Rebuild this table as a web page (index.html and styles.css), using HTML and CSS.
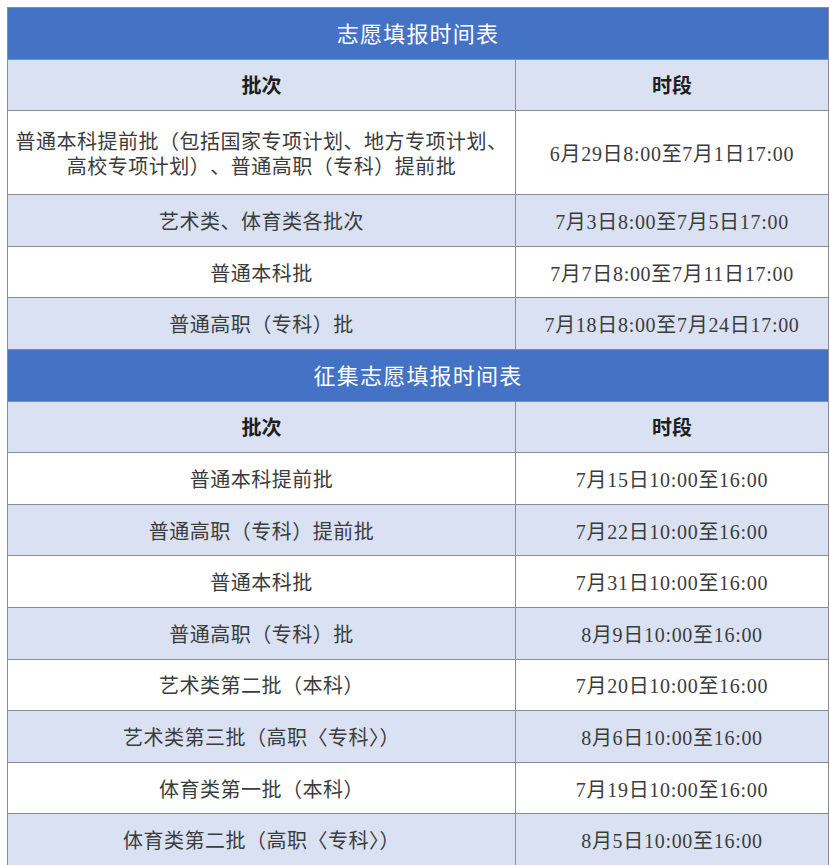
FILE: index.html
```html
<!DOCTYPE html>
<html lang="zh-CN">
<head>
<meta charset="utf-8">
<title>志愿填报时间表</title>
<link rel="stylesheet" href="styles.css">
</head>
<body>
<table class="schedule">
  <colgroup>
    <col class="col-batch">
    <col class="col-time">
  </colgroup>
  <tbody>
    <tr class="title"><th colspan="2">志愿填报时间表</th></tr>
    <tr class="head"><th>批次</th><th>时段</th></tr>
    <tr class="tall"><td>普通本科提前批（包括国家专项计划、地方专项计划、<br>高校专项计划）、普通高职（专科）提前批</td><td class="time">6月29日8:00至7月1日17:00</td></tr>
    <tr class="alt"><td>艺术类、体育类各批次</td><td class="time">7月3日8:00至7月5日17:00</td></tr>
    <tr><td>普通本科批</td><td class="time">7月7日8:00至7月11日17:00</td></tr>
    <tr class="alt"><td>普通高职（专科）批</td><td class="time">7月18日8:00至7月24日17:00</td></tr>
    <tr class="title"><th colspan="2">征集志愿填报时间表</th></tr>
    <tr class="head"><th>批次</th><th>时段</th></tr>
    <tr><td>普通本科提前批</td><td class="time">7月15日10:00至16:00</td></tr>
    <tr class="alt"><td>普通高职（专科）提前批</td><td class="time">7月22日10:00至16:00</td></tr>
    <tr><td>普通本科批</td><td class="time">7月31日10:00至16:00</td></tr>
    <tr class="alt"><td>普通高职（专科）批</td><td class="time">8月9日10:00至16:00</td></tr>
    <tr><td>艺术类第二批（本科）</td><td class="time">7月20日10:00至16:00</td></tr>
    <tr class="alt"><td>艺术类第三批（高职〈专科〉）</td><td class="time">8月6日10:00至16:00</td></tr>
    <tr><td>体育类第一批（本科）</td><td class="time">7月19日10:00至16:00</td></tr>
    <tr class="alt"><td>体育类第二批（高职〈专科〉）</td><td class="time">8月5日10:00至16:00</td></tr>
  </tbody>
</table>
</body>
</html>
```
FILE: styles.css
```css
html, body {
  margin: 0;
  padding: 0;
  background: #ffffff;
}
body {
  padding: 7px 0 0 7px;
  font-family: "Liberation Serif", "Noto Sans CJK SC", serif;
  color: #3c3c3c;
}
.schedule {
  border-collapse: collapse;
  width: 821px;
  table-layout: fixed;
}
.col-batch { width: 508px; }
.col-time { width: 313px; }
.schedule th,
.schedule td {
  border: 1px solid #8c8c98;
  text-align: center;
  vertical-align: middle;
  padding: 4px 0 0;
  font-size: 20px;
  line-height: 25px;
  height: 46.6px;
}
.schedule td {
  letter-spacing: 0.5px;
}
.schedule td.time {
  letter-spacing: 0.7px;
}
.title th {
  background: #4472c4;
  color: #ffffff;
  font-weight: 400;
  font-size: 22px;
  letter-spacing: 1.2px;
  padding-top: 2px;
  height: 48.6px;
}
.head th {
  background: #d9e1f2;
  color: #1e1e1e;
  font-weight: 700;
}
.alt td {
  background: #d9e1f2;
}
.tall td {
  height: 79px;
  text-spacing-trim: space-all;
}
```
